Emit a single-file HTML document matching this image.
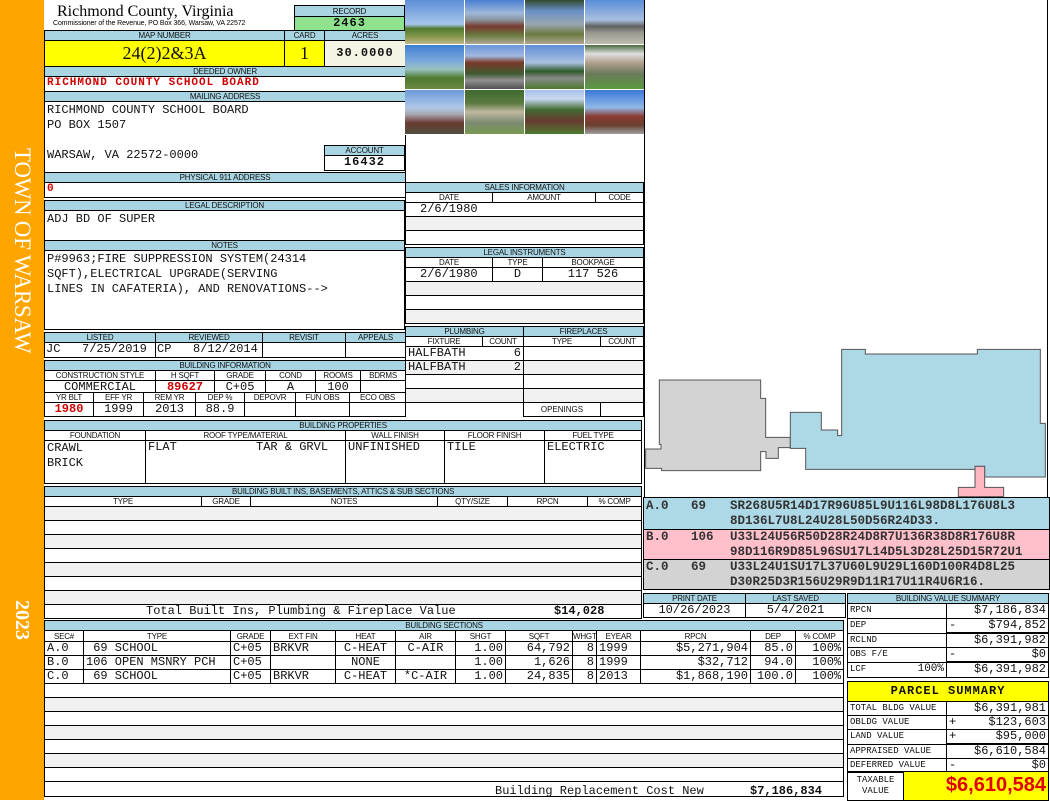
<!DOCTYPE html>
<html><head><meta charset="utf-8"><style>
*{margin:0;padding:0;box-sizing:border-box}
body{width:1050px;height:800px;position:relative;background:#fff;overflow:hidden;font-family:"Liberation Mono",monospace}
.a{position:absolute}
table{position:absolute;border-collapse:collapse;table-layout:fixed}
td{border:1px solid #000;padding:0 2px;overflow:hidden;white-space:nowrap;font:12px/13px "Liberation Mono",monospace;color:#111;vertical-align:top}
td.h{background:#a9d5e3;font:8px/9px "Liberation Sans",sans-serif;text-align:center;padding:0;vertical-align:middle;letter-spacing:-.2px}
td.w{background:#fff;font:8px/9px "Liberation Sans",sans-serif;text-align:center;padding:0;vertical-align:middle}
.r{text-align:right}.c{text-align:center}
.red{color:#d00000;font-weight:bold}
.g td{background:#f1f1f1}
.ph{position:absolute;width:59px;height:44px}
.sm{font:10px/13px "Liberation Mono",monospace}
.t{position:absolute;font:12px/14px "Liberation Mono",monospace;color:#111;white-space:nowrap}
</style></head><body>
<div class="a" style="left:0;top:0;width:44px;height:800px;background:#ffa500"></div>
<div class="a" style="left:6px;top:148px;width:32px;height:240px;writing-mode:vertical-rl;font:23px/32px 'Liberation Serif',serif;color:#fff;letter-spacing:-.3px">TOWN OF WARSAW</div>
<div class="a" style="left:8px;top:600px;width:28px;height:55px;writing-mode:vertical-rl;font:bold 20px/28px 'Liberation Serif',serif;color:#fff">2023</div>

<div class="a" style="left:57px;top:3px;font:16px/18px 'Liberation Serif',serif;color:#000">Richmond County, Virginia</div>
<div class="a" style="left:53px;top:20px;font:7px/8px 'Liberation Sans',sans-serif;color:#000;letter-spacing:-.1px">Commissioner of the Revenue, PO Box 366, Warsaw, VA 22572</div>

<table style="left:294px;top:5px;width:111px"><tr style="height:11px"><td class="h">RECORD</td></tr><tr style="height:14px"><td style="background:#8fe38f;text-align:center;font-weight:bold;letter-spacing:1px">2463</td></tr></table>

<table style="left:44px;top:30px;width:361px">
<col style="width:240px"><col style="width:40px"><col style="width:81px">
<tr style="height:9px"><td class="h">MAP NUMBER</td><td class="h">CARD</td><td class="h">ACRES</td></tr>
<tr style="height:26px"><td style="background:#ffff00;text-align:center;font:18px/24px 'Liberation Serif',serif">24(2)2&amp;3A</td><td style="background:#ffff00;text-align:center;font:18px/24px 'Liberation Serif',serif">1</td><td style="background:#f5f3e4;text-align:center;font-weight:bold;line-height:24px;letter-spacing:1px">30.0000</td></tr>
<tr style="height:9px"><td class="h" colspan="3">DEEDED OWNER</td></tr>
<tr style="height:15px"><td colspan="3" class="red" style="font-size:11px;letter-spacing:1px">RICHMOND COUNTY SCHOOL BOARD</td></tr>
<tr style="height:9px"><td class="h" colspan="3">MAILING ADDRESS</td></tr>
<tr style="height:71px"><td colspan="3" style="line-height:15px;padding-top:1px">RICHMOND COUNTY SCHOOL BOARD<br>PO BOX 1507<br><br>WARSAW, VA 22572-0000</td></tr>
<tr style="height:9px"><td class="h" colspan="3">PHYSICAL 911 ADDRESS</td></tr>
<tr style="height:15px"><td colspan="3" class="red" style="font-size:11px">0</td></tr>
</table>
<table style="left:324px;top:145px;width:81px"><tr style="height:10px"><td class="h">ACCOUNT</td></tr><tr style="height:15px"><td style="text-align:center;font-weight:bold;letter-spacing:1px">16432</td></tr></table>

<table style="left:44px;top:200px;width:361px">
<tr style="height:10px"><td class="h">LEGAL DESCRIPTION</td></tr>
<tr style="height:30px"><td style="padding-top:2px">ADJ BD OF SUPER</td></tr>
<tr style="height:10px"><td class="h">NOTES</td></tr>
<tr style="height:79px"><td style="line-height:15px;padding-top:1px">P#9963;FIRE SUPPRESSION SYSTEM(24314<br>SQFT),ELECTRICAL UPGRADE(SERVING<br>LINES IN CAFATERIA), AND RENOVATIONS--&gt;</td></tr>
</table>

<table style="left:44px;top:332px;width:361px">
<col style="width:111px"><col style="width:107px"><col style="width:83px"><col style="width:60px">
<tr style="height:10px"><td class="h">LISTED</td><td class="h">REVIEWED</td><td class="h">REVISIT</td><td class="h">APPEALS</td></tr>
<tr style="height:15px"><td style="padding:0 1px">JC&nbsp;&nbsp;&nbsp;7/25/2019</td><td style="padding:0 1px">CP&nbsp;&nbsp;&nbsp;8/12/2014</td><td></td><td></td></tr>
</table>

<table style="left:44px;top:360px;width:361px">
<col style="width:111px"><col style="width:59px"><col style="width:51px"><col style="width:50px"><col style="width:45px"><col style="width:45px">
<tr style="height:9px"><td class="h" colspan="6">BUILDING INFORMATION</td></tr>
<tr style="height:10px"><td class="h w">CONSTRUCTION STYLE</td><td class="h w">H SQFT</td><td class="h w">GRADE</td><td class="h w">COND</td><td class="h w">ROOMS</td><td class="h w">BDRMS</td></tr>
<tr style="height:13px"><td class="c" style="line-height:12px">COMMERCIAL</td><td class="c red" style="line-height:12px">89627</td><td class="c" style="line-height:12px">C+05</td><td class="c" style="line-height:12px">A</td><td class="c" style="line-height:12px">100</td><td></td></tr>
</table>
<table style="left:44px;top:392px;width:361px">
<col style="width:49px"><col style="width:50px"><col style="width:52px"><col style="width:49px"><col style="width:51px"><col style="width:54px"><col style="width:56px">
<tr style="height:10px"><td class="h w">YR BLT</td><td class="h w">EFF YR</td><td class="h w">REM YR</td><td class="h w">DEP %</td><td class="h w">DEPOVR</td><td class="h w">FUN OBS</td><td class="h w">ECO OBS</td></tr>
<tr style="height:14px"><td class="c red">1980</td><td class="c">1999</td><td class="c">2013</td><td class="c">88.9</td><td></td><td></td><td></td></tr>
</table>

<table style="left:44px;top:420px;width:597px">
<col style="width:101px"><col style="width:200px"><col style="width:99px"><col style="width:100px"><col style="width:97px">
<tr style="height:10px"><td class="h" colspan="5">BUILDING PROPERTIES</td></tr>
<tr style="height:10px"><td class="h w">FOUNDATION</td><td class="h w">ROOF TYPE/MATERIAL</td><td class="h w">WALL FINISH</td><td class="h w">FLOOR FINISH</td><td class="h w">FUEL TYPE</td></tr>
<tr style="height:43px"><td style="line-height:15px">CRAWL<br>BRICK</td><td>FLAT&nbsp;&nbsp;&nbsp;&nbsp;&nbsp;&nbsp;&nbsp;&nbsp;&nbsp;&nbsp;&nbsp;TAR &amp; GRVL</td><td>UNFINISHED</td><td>TILE</td><td>ELECTRIC</td></tr>
</table>

<table style="left:44px;top:486px;width:597px">
<col style="width:157px"><col style="width:49px"><col style="width:187px"><col style="width:70px"><col style="width:80px"><col style="width:54px">
<tr style="height:9px"><td class="h" colspan="6">BUILDING BUILT INS, BASEMENTS, ATTICS &amp; SUB SECTIONS</td></tr>
<tr style="height:10px"><td class="h w">TYPE</td><td class="h w">GRADE</td><td class="h w">NOTES</td><td class="h w">QTY/SIZE</td><td class="h w">RPCN</td><td class="h w">% COMP</td></tr>
<tr class="g" style="height:14px"><td colspan="6"></td></tr>
<tr style="height:14px"><td colspan="6"></td></tr>
<tr class="g" style="height:14px"><td colspan="6"></td></tr>
<tr style="height:14px"><td colspan="6"></td></tr>
<tr class="g" style="height:14px"><td colspan="6"></td></tr>
<tr style="height:14px"><td colspan="6"></td></tr>
<tr class="g" style="height:14px"><td colspan="6"></td></tr>
<tr style="height:14px"><td colspan="6"></td></tr>
</table>
<div class="t" style="left:146px;top:604px">Total Built Ins, Plumbing &amp; Fireplace Value</div>
<div class="t" style="left:554px;top:604px;font-weight:bold">$14,028</div>

<table style="left:44px;top:620px;width:799px">
<col style="width:39px"><col style="width:147px"><col style="width:40px"><col style="width:65px"><col style="width:60px"><col style="width:60px"><col style="width:50px"><col style="width:67px"><col style="width:24px"><col style="width:44px"><col style="width:110px"><col style="width:45px"><col style="width:48px">
<tr style="height:9px"><td class="h" colspan="13">BUILDING SECTIONS</td></tr>
<tr style="height:11px"><td class="h w">SEC#</td><td class="h w">TYPE</td><td class="h w">GRADE</td><td class="h w">EXT FIN</td><td class="h w">HEAT</td><td class="h w">AIR</td><td class="h w">SHGT</td><td class="h w">SQFT</td><td class="h w">WHGT</td><td class="h w">EYEAR</td><td class="h w">RPCN</td><td class="h w">DEP</td><td class="h w">% COMP</td></tr>
<tr style="height:14px"><td>A.0</td><td>&nbsp;69 SCHOOL</td><td>C+05</td><td>BRKVR</td><td class="c">C-HEAT</td><td class="c">C-AIR</td><td class="r">1.00</td><td class="r">64,792</td><td class="r">8</td><td>1999</td><td class="r">$5,271,904</td><td class="r">85.0</td><td class="r">100%</td></tr>
<tr style="height:14px"><td>B.0</td><td>106 OPEN MSNRY PCH</td><td>C+05</td><td></td><td class="c">NONE</td><td></td><td class="r">1.00</td><td class="r">1,626</td><td class="r">8</td><td>1999</td><td class="r">$32,712</td><td class="r">94.0</td><td class="r">100%</td></tr>
<tr style="height:14px"><td>C.0</td><td>&nbsp;69 SCHOOL</td><td>C+05</td><td>BRKVR</td><td class="c">C-HEAT</td><td class="c">*C-AIR</td><td class="r">1.00</td><td class="r">24,835</td><td class="r">8</td><td>2013</td><td class="r">$1,868,190</td><td class="r">100.0</td><td class="r">100%</td></tr>
<tr style="height:14px"><td colspan="13"></td></tr>
<tr class="g" style="height:14px"><td colspan="13"></td></tr>
<tr style="height:14px"><td colspan="13"></td></tr>
<tr class="g" style="height:14px"><td colspan="13"></td></tr>
<tr style="height:14px"><td colspan="13"></td></tr>
<tr class="g" style="height:14px"><td colspan="13"></td></tr>
<tr style="height:14px"><td colspan="13"></td></tr>
<tr style="height:15px"><td colspan="13"></td></tr>
</table>
<div class="t" style="left:495px;top:784px">Building Replacement Cost New</div>
<div class="t" style="left:750px;top:784px;font-weight:bold">$7,186,834</div>

<!-- photos -->
<div class="a" style="left:405px;top:0;width:240px;height:135px;background:#fff">
<div class="ph" style="left:0;top:0;background:linear-gradient(#5d8ed6 0,#a8c6ea 55%,#4d7a30 65%,#8a9a50 85%,#c0b890)"></div>
<div class="ph" style="left:60px;top:0;background:linear-gradient(#4a7fd2 0,#9fb8d8 30%,#8a95a0 45%,#7a3a30 60%,#6a7a40 80%,#b0a890)"></div>
<div class="ph" style="left:120px;top:0;background:linear-gradient(#2f4a30 0,#6a90c8 25%,#9aa6b0 55%,#6a7a40 78%,#b0a890)"></div>
<div class="ph" style="left:180px;top:0;background:linear-gradient(#5a8ed8 0,#a8c0e0 45%,#606060 60%,#9a9a90 75%,#c0bcb0)"></div>
<div class="ph" style="left:0;top:45px;background:linear-gradient(#3f7ed0 0,#7aa8dc 35%,#9ac0c0 55%,#4d7a30 75%,#6a8a40)"></div>
<div class="ph" style="left:60px;top:45px;background:linear-gradient(#6a95d8 0,#a0b8e0 25%,#7a3a2a 40%,#3f5a30 65%,#909090 80%,#505050)"></div>
<div class="ph" style="left:120px;top:45px;background:linear-gradient(#5f8ed8 0,#a8c0e0 40%,#2f5a2a 60%,#8a8a8a 75%,#4d7a30)"></div>
<div class="ph" style="left:180px;top:45px;background:linear-gradient(#4a6a40 0,#e0e0e0 20%,#b0a090 40%,#6a7a5a 65%,#5a9a40)"></div>
<div class="ph" style="left:0;top:90px;background:linear-gradient(#6a9ad8 0,#b0c8e8 40%,#a8a8b0 55%,#6a3a30 75%,#505040)"></div>
<div class="ph" style="left:60px;top:90px;background:linear-gradient(#3f6a30 0,#5a7a40 30%,#c0b8a0 50%,#7a8a70 75%,#7a9a50)"></div>
<div class="ph" style="left:120px;top:90px;background:linear-gradient(#a8c0e8 0,#c8d8f0 20%,#3f6a30 45%,#6a3a30 70%,#4d7a30)"></div>
<div class="ph" style="left:180px;top:90px;background:linear-gradient(#3a78d8 0,#90b8e8 40%,#8a3a30 60%,#6a4030 80%,#a0a0a0)"></div>
</div>

<table style="left:405px;top:182px;width:238px">
<col style="width:87px"><col style="width:103px"><col style="width:48px">
<tr style="height:10px"><td class="h" colspan="3">SALES INFORMATION</td></tr>
<tr style="height:10px"><td class="h w">DATE</td><td class="h w">AMOUNT</td><td class="h w">CODE</td></tr>
<tr style="height:14px"><td colspan="3" style="padding-left:14px">2/6/1980</td></tr>
<tr class="g" style="height:14px"><td colspan="3"></td></tr>
<tr style="height:14px"><td colspan="3"></td></tr>
</table>
<table style="left:405px;top:247px;width:238px">
<col style="width:87px"><col style="width:50px"><col style="width:101px">
<tr style="height:10px"><td class="h" colspan="3">LEGAL INSTRUMENTS</td></tr>
<tr style="height:10px"><td class="h w">DATE</td><td class="h w">TYPE</td><td class="h w">BOOKPAGE</td></tr>
<tr style="height:14px"><td style="padding-left:14px">2/6/1980</td><td class="c">D</td><td class="c">117 526</td></tr>
<tr class="g" style="height:14px"><td colspan="3"></td></tr>
<tr style="height:14px"><td colspan="3"></td></tr>
<tr class="g" style="height:14px"><td colspan="3"></td></tr>
</table>

<table style="left:405px;top:326px;width:118px">
<col style="width:77px"><col style="width:41px">
<tr style="height:10px"><td class="h" colspan="2">PLUMBING</td></tr>
<tr style="height:10px"><td class="h w">FIXTURE</td><td class="h w">COUNT</td></tr>
<tr style="height:14px"><td style="border-right:0">HALFBATH</td><td class="r" style="border-left:0">6</td></tr>
<tr class="g" style="height:14px"><td style="border-right:0">HALFBATH</td><td class="r" style="border-left:0">2</td></tr>
<tr style="height:14px"><td colspan="2"></td></tr>
<tr class="g" style="height:14px"><td colspan="2"></td></tr>
</table>
<table style="left:523px;top:326px;width:120px">
<col style="width:77px"><col style="width:43px">
<tr style="height:10px"><td class="h" colspan="2">FIREPLACES</td></tr>
<tr style="height:10px"><td class="h w">TYPE</td><td class="h w">COUNT</td></tr>
<tr style="height:14px"><td colspan="2"></td></tr>
<tr class="g" style="height:14px"><td colspan="2"></td></tr>
<tr style="height:14px"><td colspan="2"></td></tr>
<tr class="g" style="height:14px"><td colspan="2"></td></tr>
<tr style="height:14px"><td class="w">OPENINGS</td><td></td></tr>
</table>

<!-- sketch -->
<div class="a" style="left:644px;top:0;width:1px;height:497px;background:#000"></div>
<div class="a" style="left:1047px;top:0;width:1px;height:497px;background:#000"></div>
<svg class="a" style="left:645px;top:300px" width="405" height="200" viewBox="0 0 1215 600">
<polygon points="43,240 347,240 347,295 362,295 362,412 436,412 436,443 400,443 400,475 363,475 363,455 347,455 347,512 50,512 50,505 2,505 2,447 48,447 48,433 43,433" fill="#d3d3d3" stroke="#555" stroke-width="3"/>
<polygon points="436,337 529,337 529,390 578,390 578,407 590,407 590,148 661,148 661,162 997,162 997,148 1186,148 1186,370 1201,370 1201,531 1019,531 1019,499 990,499 990,508 482,508 482,445 436,445" fill="#add8e6" stroke="#555" stroke-width="3"/>
<polygon points="990,499 1019,499 1019,562 1076,562 1076,590 940,590 940,562 990,562" fill="#ffb6c1" stroke="#555" stroke-width="3"/>
</svg>

<div class="a" style="left:643px;top:497px;width:407px;height:93px;border:1px solid #000">
<div class="a" style="left:0;top:0;width:405px;height:31px;background:#add8e6"></div>
<div class="a" style="left:0;top:31px;width:405px;height:31px;background:#ffc0cb;border-top:1px solid #000;border-bottom:1px solid #000"></div>
<div class="a" style="left:0;top:62px;width:405px;height:29px;background:#d3d3d3"></div>
</div>
<div class="t" style="left:646px;top:499px;font:bold 12.5px/15px 'Liberation Mono',monospace;color:#333">A.0&nbsp;&nbsp;&nbsp;69</div>
<div class="t" style="left:730px;top:499px;font:bold 12.5px/15px 'Liberation Mono',monospace;color:#333">SR268U5R14D17R96U85L9U116L98D8L176U8L3<br>8D136L7U8L24U28L50D56R24D33.</div>
<div class="t" style="left:646px;top:530px;font:bold 12.5px/15px 'Liberation Mono',monospace;color:#333">B.0&nbsp;&nbsp;&nbsp;106</div>
<div class="t" style="left:730px;top:530px;font:bold 12.5px/15px 'Liberation Mono',monospace;color:#333">U33L24U56R50D28R24D8R7U136R38D8R176U8R<br>98D116R9D85L96SU17L14D5L3D28L25D15R72U1</div>
<div class="t" style="left:646px;top:560px;font:bold 12.5px/15px 'Liberation Mono',monospace;color:#333">C.0&nbsp;&nbsp;&nbsp;69</div>
<div class="t" style="left:730px;top:560px;font:bold 12.5px/15px 'Liberation Mono',monospace;color:#333">U33L24U1SU17L37U60L9U29L160D100R4D8L25<br>D30R25D3R156U29R9D11R17U11R4U6R16.</div>

<table style="left:643px;top:593px;width:202px">
<col style="width:102px"><col style="width:100px">
<tr style="height:10px"><td class="h">PRINT DATE</td><td class="h">LAST SAVED</td></tr>
<tr style="height:14px"><td class="c">10/26/2023</td><td class="c">5/4/2021</td></tr>
</table>

<table style="left:847px;top:593px;width:201px">
<col style="width:99px"><col style="width:102px">
<tr style="height:10px"><td class="h" colspan="2">BUILDING VALUE SUMMARY</td></tr>
<tr style="height:15px"><td class="sm" style="font-size:9px">RPCN</td><td class="r">$7,186,834</td></tr>
<tr style="height:14px"><td class="sm" style="font-size:9px">DEP</td><td class="r"><span style="float:left">-</span>$794,852</td></tr>
<tr style="height:14px"><td class="sm" style="font-size:9px">RCLND</td><td class="r" style="border-top:2px solid #000">$6,391,982</td></tr>
<tr style="height:14px"><td class="sm" style="font-size:9px">OBS F/E</td><td class="r"><span style="float:left">-</span>$0</td></tr>
<tr style="height:15px"><td class="sm" style="font-size:9px">LCF<span style="float:right;font-size:11px">100%</span></td><td class="r" style="border-top:2px solid #000">$6,391,982</td></tr>
</table>

<table style="left:847px;top:681px;width:201px">
<col style="width:99px"><col style="width:102px">
<tr style="height:20px"><td colspan="2" style="background:#ffff00;text-align:center;font:bold 12px/18px 'Liberation Mono',monospace;letter-spacing:1px">PARCEL SUMMARY</td></tr>
<tr style="height:14px"><td class="sm" style="font-size:9px">TOTAL BLDG VALUE</td><td class="r">$6,391,981</td></tr>
<tr style="height:14px"><td class="sm" style="font-size:9px">OBLDG VALUE</td><td class="r"><span style="float:left">+</span>$123,603</td></tr>
<tr style="height:14px"><td class="sm" style="font-size:9px">LAND VALUE</td><td class="r"><span style="float:left">+</span>$95,000</td></tr>
<tr style="height:14px"><td class="sm" style="font-size:9px">APPRAISED VALUE</td><td class="r" style="border-top:2px solid #000">$6,610,584</td></tr>
<tr style="height:14px"><td class="sm" style="font-size:9px">DEFERRED VALUE</td><td class="r"><span style="float:left">-</span>$0</td></tr>
</table>
<table style="left:847px;top:771px;width:201px">
<col style="width:56px"><col style="width:145px">
<tr style="height:29px"><td class="sm c" style="font-size:9px;line-height:11px;padding-top:3px">TAXABLE<br>VALUE</td><td style="background:#ffff00;text-align:right;color:#e00000;font:bold 20px/27px 'Liberation Sans',sans-serif">$6,610,584</td></tr>
</table>
</body></html>
